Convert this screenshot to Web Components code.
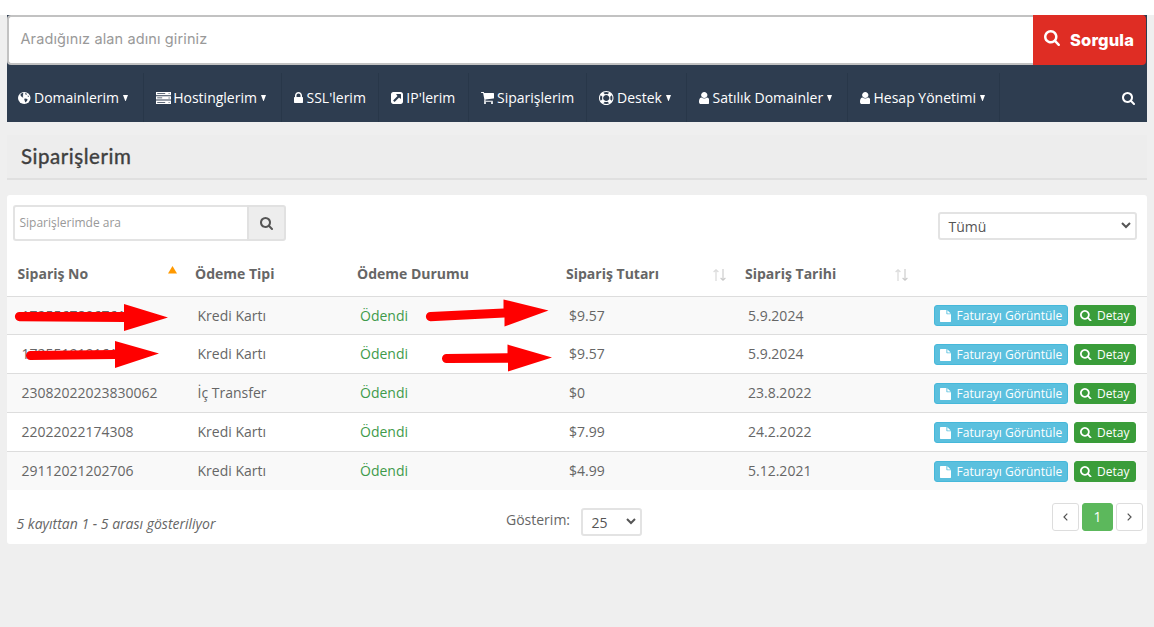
<!DOCTYPE html>
<html lang="tr">
<head>
<meta charset="utf-8">
<title>Siparişlerim</title>
<style>
html{background:#fff}
body{margin:0;width:1154px;height:627px;overflow:hidden;font:14px/20px "Open Sans","Noto Sans",sans-serif;color:#666}
</style>
</head>
<body>
<orders-page></orders-page>
<script>
const ICONS = {
  search: ['64 128 1664 1664', '<path d="M1216 832q0-185-131.5-316.5t-316.5-131.5-316.5 131.5-131.5 316.5 131.5 316.5 316.5 131.5 316.5-131.5 131.5-316.5zm512 832q0 52-38 90t-90 38q-54 0-90-38l-343-342q-179 124-399 124-143 0-273.5-55.5t-225-150-150-225-55.5-273.5 55.5-273.5 150-225 225-150 273.5-55.5 273.5 55.5 225 150 150 225 55.5 273.5q0 220-124 399l343 343q37 37 37 90z"/>'],
  user: ['256 128 1280 1536', '<path d="M1536 1399q0 109-62.5 187t-150.5 78h-854q-88 0-150.5-78t-62.5-187q0-85 8.5-160.5t31.5-152 58.5-131 94-89 134.5-34.5q131 128 313 128t313-128q76 0 134.5 34.5t94 89 58.5 131 31.5 152 8.5 160.5zm-256-887q0 159-112.5 271.5t-271.5 112.5-271.5-112.5-112.5-271.5 112.5-271.5 271.5-112.5 271.5 112.5 112.5 271.5z"/>'],
  lock: ['320 128 1152 1408', '<path d="M640 768h512v-192q0-106-75-181t-181-75-181 75-75 181v192zm832 96v576q0 40-28 68t-68 28h-960q-40 0-68-28t-28-68v-576q0-40 28-68t68-28h32v-192q0-184 132-316t316-132 316 132 132 316v192h32q40 0 68 28t28 68z"/>'],
  cart: ['64 256 1664 1408', '<path d="M704 1536q0 52-38 90t-90 38-90-38-38-90 38-90 90-38 90 38 38 90zm896 0q0 52-38 90t-90 38-90-38-38-90 38-90 90-38 90 38 38 90zm128-1088v512q0 24-16.5 42.5t-40.5 21.5l-1044 122q13 60 13 70 0 16-24 64h920q26 0 45 19t19 45-19 45-45 19h-1024q-26 0-45-19t-19-45q0-11 8-31.5t16-36 21.5-40 15.5-29.5l-177-823h-204q-26 0-45-19t-19-45 19-45 45-19h256q16 0 28.5 6.5t19.5 15.5 13 24.5 8 26 5.5 29.5 4.5 26h1201q26 0 45 19t19 45z"/>'],
  ring: ['0 0 1792 1792', '<path d="M896 0q182 0 348 71t286 191 191 286 71 348-71 348-191 286-286 191-348 71-348-71-286-191-191-286-71-348 71-348 191-286 286-191 348-71zm0 128q-190 0-361 90l194 194q82-28 167-28t167 28l194-194q-171-90-361-90zm-678 1129l194-194q-28-82-28-167t28-167l-194-194q-90 171-90 361t90 361zm678 407q190 0 361-90l-194-194q-82 28-167 28t-167-28l-194 194q171 90 361 90zm0-384q159 0 271.5-112.5t112.5-271.5-112.5-271.5-271.5-112.5-271.5 112.5-112.5 271.5 112.5 271.5 271.5 112.5zm484-217l194 194q90-171 90-361t-90-361l-194 194q28 82 28 167t-28 167z"/>'],
  link: ['128 128 1536 1536', '<path d="M1408 928v-480q0-26-19-45t-45-19h-480q-42 0-59 39-17 41 14 70l144 144-534 534q-19 19-19 45t19 45l102 102q19 19 45 19t45-19l534-534 144 144q18 19 45 19 12 0 25-5 39-17 39-59zm256-512v960q0 119-84.5 203.5t-203.5 84.5h-960q-119 0-203.5-84.5t-84.5-203.5v-960q0-119 84.5-203.5t203.5-84.5h960q119 0 203.5 84.5t84.5 203.5z"/>'],
  file: ['128 0 1536 1792', '<path d="M1152 512v-472q22 14 36 28l408 408q14 14 28 36h-472zm-128 32q0 40 28 68t68 28h544v1056q0 40-28 68t-68 28h-1344q-40 0-68-28t-28-68v-1600q0-40 28-68t68-28h800v544z"/>'],
  globe: ['0 0 12 12', '<circle cx="6" cy="6" r="6"/><path fill="#2e3d50" d="M2.600 2.100 4.100 1.100 5.300 1.300 4.600 2.200 5.200 3 4.400 4 5.200 5.300 4.600 5.500 3.200 4.500 2.400 3.300zM6.600 1.200l1.700.4.3.8-1 .3-.7-.6zM5.900 6.700l1.800-.3 1.600 1.100-.7 1.600-1.500 1.300-.6-1.500zM9.200 3.500l.9.3.3 1.200-.9-.2z"/>'],
  server: ['0 0 15 12', '<path d="M0 0h15v3.300H0zM0 4.300h15v3.300H0zM0 8.600h15v3.400H0z"/><path fill="#2e3d50" d="M1.200 1.300h8v.7h-8zM1.200 5.600h5v.7h-5zM1.200 10h8v.7h-8zM12.600 1.200h1v.9h-1zM12.600 5.500h1v.9h-1zM12.600 9.900h1v.9h-1z"/>'],
  caret: ['0 0 6 6', '<path d="M0 0h6L3.300 6h-.6z"/>'],
  asc: ['0 0 9 8', '<path d="M4.500 0 9 7.500H0z"/>'],
  both: ['0 0 13 12', '<path fill="none" stroke="#dcdcdc" stroke-width="1.300" d="M3 12V1M.6 3 3 .8 5.400 3"/><path fill="none" stroke="#c9c9c9" stroke-width="1.100" d="M10 0v11M7.600 9 10 11.200 12.400 9"/>'],
  down: ['0 0 10 7', '<path fill="none" stroke="currentColor" stroke-width="2" d="m1 1 4 4 4-4"/>'],
  left: ['0 0 5 8', '<path fill="none" stroke="currentColor" stroke-width="1.200" d="M4.300.7 1 4l3.300 3.300"/>'],
  right: ['0 0 5 8', '<path fill="none" stroke="currentColor" stroke-width="1.200" d="M.7.7 4 4 .7 7.300"/>']
};

class Base extends HTMLElement {
  constructor() { super(); this.attachShadow({mode: 'open'}); }
  connectedCallback() {
    const t = document.createElement('template');
    t.innerHTML = this.render();
    this.shadowRoot.replaceChildren(t.content.cloneNode(true));
  }
  a(n, d = '') { return this.getAttribute(n) ?? d; }
}

customElements.define('ui-icon', class extends Base {
  render() {
    const [box, body] = ICONS[this.a('name')];
    return `<style>:host{display:block;flex:none;width:${this.a('w')}px;height:${this.a('h')}px}svg{display:block;width:100%;height:100%}</style>
    <svg viewBox="${box}" fill="currentColor" preserveAspectRatio="none">${body}</svg>`;
  }
});

customElements.define('domain-search', class extends Base {
  render() {
    return `<style>
    :host{display:flex;height:50px;padding-right:1px;background:#2e3d50}
    .in{flex:1;box-sizing:border-box;border:2px solid #c2c2c2;border-right:0;border-radius:4px 0 0 4px;background:#fff;padding:0 0 0 11.500px;color:#999;font:14.500px/44px Inter,sans-serif}
    .in span{letter-spacing:.12px}
    .btn{width:113px;box-sizing:border-box;background:#df2d24;border-radius:0 4px 4px 0;color:#fff;display:flex;align-items:center;padding-left:11px;font:800 16.500px/48px Inter,sans-serif}
    ui-icon{margin:-4px 10px 0 0}
    .btn span{letter-spacing:.15px;white-space:nowrap;margin-top:-1px}
    </style><div class="in"><span>Aradığınız alan adını giriniz</span></div><div class="btn"><ui-icon name="search" w="16" h="16"></ui-icon><span>Sorgula</span></div>`;
  }
});

customElements.define('nav-item', class extends Base {
  render() {
    return `<style>
    :host{display:flex;align-items:center;box-sizing:border-box;height:49px;border-right:1px solid #283749;padding:0 0 0 ${this.a('pad')}px;white-space:nowrap}
    .c{margin-left:4px;margin-top:1px}
    .l{margin-left:${this.a('gap','4')}px}
    </style><ui-icon name="${this.a('icon')}" w="${this.a('w')}" h="${this.a('h')}"></ui-icon><span class="l"><slot></slot></span>${this.hasAttribute('menu') ? '<ui-icon class="c" name="caret" w="5" h="6"></ui-icon>' : ''}`;
  }
});

customElements.define('main-nav', class extends Base {
  render() {
    return `<style>
    :host{display:grid;grid-template-columns:137px 138px 97px 90px 118px 100px 161px 152px 1fr;height:49px;padding-top:8px;background:#2e3d50;color:#fff}
    .s{justify-self:end;align-self:center;margin:2px 12.500px 0 0}
    </style>
    <nav-item icon="globe" w="12.500" h="12" pad="11.300" gap="3.200" menu>Domainlerim</nav-item>
    <nav-item icon="server" w="15" h="12" pad="11.500" gap="2.700" menu>Hostinglerim</nav-item>
    <nav-item icon="lock" w="9" h="11" pad="12" gap="3.500">SSL'lerim</nav-item>
    <nav-item icon="link" w="12" h="12" pad="12" gap="3.300">IP'lerim</nav-item>
    <nav-item icon="cart" w="13" h="12" pad="11.500" gap="3.500">Siparişlerim</nav-item>
    <nav-item icon="ring" w="14.500" h="14" pad="12" gap="3.500" menu>Destek</nav-item>
    <nav-item icon="user" w="10.500" h="12" pad="11.500" gap="3.500" menu>Satılık Domainler</nav-item>
    <nav-item icon="user" w="10.500" h="12" pad="11.500" gap="3.500" menu>Hesap Yönetimi</nav-item>
    <ui-icon class="s" name="search" w="13" h="13"></ui-icon>`;
  }
});

customElements.define('page-title', class extends Base {
  render() {
    return `<style>:host{display:block;box-sizing:border-box;height:45px;margin-top:13px;background:#ededed;border-bottom:2px solid #e0e0e0;padding:6px 0 0 14px;color:#3f3f3f;font:400 20.500px/31px Lato,sans-serif}span{letter-spacing:.55px;-webkit-text-stroke:.4px}</style><span><slot></slot></span>`;
  }
});

customElements.define('select-box', class extends Base {
  render() {
    return `<style>:host{display:flex;box-sizing:border-box;align-items:center;justify-content:space-between;height:28px;width:${this.a('w')}px;border:2px solid #e3e3e3;border-radius:3px;background:#fff;padding:2px 4px 0 8.500px;color:#555}ui-icon{margin-top:-3px}</style><span><slot></slot></span><ui-icon name="down" w="10" h="7"></ui-icon>`;
  }
});

customElements.define('list-toolbar', class extends Base {
  render() {
    return `<style>
    :host{display:flex;justify-content:space-between;align-items:flex-start;height:56px;padding:10px 10px 0 6px;box-sizing:border-box}
    .g{display:flex;width:273px;height:36px}
    .f{width:234px;box-sizing:border-box;border:2px solid #e3e3e3;border-right:0;border-radius:3px 0 0 3px;padding-left:4.500px;font-size:12px;line-height:32px;color:#999}
    .b{flex:1;box-sizing:border-box;border:2px solid #e1e1e1;border-radius:0 3px 3px 0;background:#ededed;display:flex;align-items:center;justify-content:center;color:#555}
    select-box{margin-top:7px}
    </style><div class="g"><div class="f"><span>Siparişlerimde ara</span></div><div class="b"><ui-icon name="search" w="13" h="13"></ui-icon></div></div><select-box w="199">Tümü</select-box>`;
  }
});

customElements.define('ui-button', class extends Base {
  render() {
    const blue = this.a('kind') === 'info';
    return `<style>:host{display:flex;align-items:center;box-sizing:border-box;height:21px;width:${blue ? 134 : 62}px;border:1px solid ${blue ? '#46b8da' : '#3a9d3a'};border-radius:3px;background:${blue ? '#5bc0de' : '#3a9d3a'};color:#fff;font-size:12px;line-height:19px;padding-left:5px;white-space:nowrap}ui-icon{margin-right:${blue ? 5.5 : 5.500}px}.t{letter-spacing:${blue ? '.03px' : '0'}}</style>
    <ui-icon name="${blue ? 'file' : 'search'}" w="${blue ? 11 : 11.5}" h="${blue ? 12 : 11.5}"></ui-icon><span class="t"><slot></slot></span>`;
  }
});

const COLS = 'grid-template-columns:177px 162px 209px 179px 189px 1fr';

customElements.define('orders-head', class extends Base {
  render() {
    return `<style>:host{display:grid;${COLS};height:45px;font-weight:700}
    div{display:flex;justify-content:space-between;align-items:flex-start;padding:13px 7px 0 11px}
    div:first-child{padding-left:11.500px}div:nth-child(2){padding-left:10.600px}
    .up{color:#f90;margin-top:2px}.s{margin-top:5px;margin-right:1.500px}.d{margin-top:5px;margin-right:8.500px}</style>
    <div><span>Sipariş No</span><ui-icon class="up" name="asc" w="9" h="8"></ui-icon></div>
    <div><span>Ödeme Tipi</span></div><div><span>Ödeme Durumu</span></div>
    <div><span>Sipariş Tutarı</span><ui-icon class="s" name="both" w="13" h="12"></ui-icon></div>
    <div><span>Sipariş Tarihi</span><ui-icon class="d" name="both" w="13" h="12"></ui-icon></div>`;
  }
});
customElements.define('order-row', class extends Base {
  render() {
    const first = this.hasAttribute('first');
    return `<style>:host{display:grid;${COLS};box-sizing:border-box;height:${first ? 38 : 39}px;border-top:1px solid #ddd;background:${this.hasAttribute('odd') ? '#f9f9f9' : '#fff'}}
    .c{padding:9px 0 0 14px;white-space:nowrap}.c:nth-of-type(1){padding-left:14.500px}.c:nth-of-type(2){padding-left:13.500px}.ok{color:#3f9b4b}
    .a{display:flex;gap:6px;padding:${first ? 8 : 9}px 0 0 11px}</style>
    <div class="c">${this.a('no')}</div><div class="c">${this.a('type')}</div><div class="c ok">Ödendi</div><div class="c">${this.a('sum')}</div><div class="c">${this.a('date')}</div>
    <div class="a"><ui-button kind="info">Faturayı Görüntüle</ui-button><ui-button kind="ok">Detay</ui-button></div>`;
  }
});

customElements.define('page-list', class extends Base {
  render() {
    return `<style>:host{display:flex;gap:3px}
    div{box-sizing:border-box;width:27px;height:28px;border:1px solid #ddd;border-radius:3px;display:flex;align-items:center;justify-content:center;color:#555}
    .on{width:31px;background:#5cb85c;border-color:#5cb85c;color:#fff}</style>
    <div><ui-icon name="left" w="5" h="8"></ui-icon></div><div class="on">1</div><div><ui-icon name="right" w="5" h="8"></ui-icon></div>`;
  }
});

customElements.define('list-footer', class extends Base {
  render() {
    return `<style>:host{display:grid;grid-template-columns:489.500px 1fr auto;height:54px;padding:0 4px 0 9.500px;align-items:start}
    i{margin-top:24px;font-size:14px}
    .m{display:flex;gap:11px}.m span{margin-top:20px}.m select-box{margin-top:18px}
    page-list{margin-top:13px}</style>
    <i>5 kayıttan 1 - 5 arası gösteriliyor</i><div class="m"><span>Gösterim:</span><select-box w="61">25</select-box></div><page-list></page-list>`;
  }
});

customElements.define('markup-arrows', class extends Base {
  render() {
    return `<style>:host{position:absolute;left:0;top:0;width:1154px;height:627px;pointer-events:none}svg{display:block}</style>
    <svg width="1154" height="627" fill="red">
    <path d="M19.500 312 124 312V304L168 317.500 124 331V322L19.500 321.200A4.600 4.600 0 0 1 19.500 312z"/>
    <path d="M30.500 351 115 350V341L159 353.500 115 368V359L30.500 360A4.500 4.500 0 0 1 30.500 351z"/>
    <path d="M430.500 312 503.500 308.500V299.500L548.500 310.500 504.500 326.500V317.500L430.500 321.200A4.600 4.600 0 0 1 430.500 312z"/>
    <path d="M446.500 354 507.500 353.300V344.500L552 357.500 508 371.500V362.800L446.500 363A4.500 4.500 0 0 1 446.500 354z"/>
    </svg>`;
  }
});

customElements.define('orders-page', class extends Base {
  render() {
    return `<style>
    :host{display:block;position:relative;height:612px;border-top:15px solid #fff;background:#efefef;padding:0 7px}
    .card{margin-top:15px;background:#fff;border-radius:3px;height:349px;overflow:hidden}
    markup-arrows{top:-15px}
    </style>
    <domain-search></domain-search>
    <main-nav></main-nav>
    <page-title>Siparişlerim</page-title>
    <div class="card">
      <list-toolbar></list-toolbar>
      <orders-head></orders-head>
      <order-row first odd no="1725567896761" type="Kredi Kartı" sum="$9.57" date="5.9.2024"></order-row>
      <order-row no="1725519191614" type="Kredi Kartı" sum="$9.57" date="5.9.2024"></order-row>
      <order-row odd no="23082022023830062" type="İç Transfer" sum="$0" date="23.8.2022"></order-row>
      <order-row no="22022022174308" type="Kredi Kartı" sum="$7.99" date="24.2.2022"></order-row>
      <order-row odd no="29112021202706" type="Kredi Kartı" sum="$4.99" date="5.12.2021"></order-row>
      <list-footer></list-footer>
    </div>
    <markup-arrows></markup-arrows>`;
  }
});
</script>
</body>
</html>
